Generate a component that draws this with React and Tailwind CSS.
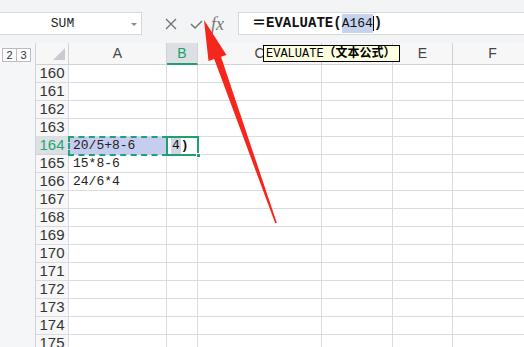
import React from 'react'

const ROWS = [160, 161, 162, 163, 164, 165, 166, 167, 168, 169, 170, 171, 172, 173, 174, 175]
const COLS = ['A', 'B', 'C', 'D', 'E', 'F']
const DATA = { '165A': '15*8-6', '166A': '24/6*4' }

const cellBase = 'border-r border-b border-[#d9dbe5] bg-white'
const mono = { fontFamily: '"Liberation Mono", "Noto Sans CJK SC", monospace' }
const sans = { fontFamily: '"Liberation Sans", "Noto Sans", sans-serif' }

function Toolbar() {
  return (
    <div className="flex h-[43px] items-start bg-[#f3f4f6] pt-[12px]">
      <div className="relative flex h-[23px] w-[142px] shrink-0 items-center justify-center border border-l-0 border-[#d6d8dc] bg-white text-[13px] text-[#222]" style={mono}>
        <span className="mr-[16px]">SUM</span>
        <span className="absolute right-[4px] top-[10px] h-0 w-0 border-x-[3px] border-t-[3px] border-x-transparent border-t-[#888]" />
      </div>
      <div className="flex h-[23px] w-[96px] shrink-0 items-center text-[#666]">
        <svg className="ml-[23px]" width="12" height="12" viewBox="0 0 12 12">
          <path d="M1 1 L11 11 M11 1 L1 11" stroke="#707070" strokeWidth="1.3" fill="none" />
        </svg>
        <svg className="ml-[13px]" width="13" height="10" viewBox="0 0 13 10">
          <path d="M1 5 L5 9 L12 2" stroke="#707070" strokeWidth="1.4" fill="none" />
        </svg>
        <span className="ml-[8px] text-[18px] italic leading-none text-[#777]" style={{ fontFamily: '"Liberation Serif", serif' }}>fx</span>
      </div>
      <div className="flex h-[23px] flex-1 items-center border border-r-0 border-[#d6d8dc] bg-white pl-[13px] text-[#111]">
        <span className="text-[14px] font-bold" style={mono}>＝EVALUATE(</span>
        <span className="bg-[#c7d3ec] text-[13px]" style={mono}>A164</span>
        <span className="h-[15px] w-px bg-black" />
        <span className="text-[14px] font-bold" style={mono}>)</span>
      </div>
    </div>
  )
}

function OutlineStrip() {
  return (
    <div className="w-[36px] shrink-0 border-r border-[#cfd2da] bg-[#f5f6f8]">
      <div className="flex h-[22px] items-center pt-[2px] text-[11px] text-[#333]" style={sans}>
        <span className="h-[14px] w-[3px] border-r border-[#b9bcc4] bg-white" />
        <span className="flex h-[14px] w-[14px] items-center justify-center border-y border-r border-[#b9bcc4] bg-white">2</span>
        <span className="flex h-[14px] w-[14px] items-center justify-center border-y border-r border-[#b9bcc4] bg-white">3</span>
      </div>
    </div>
  )
}

function Grid() {
  return (
    <div className="grid flex-1 grid-cols-[33px_98px_31px_124px_71px_60px_80px] grid-rows-[22px] auto-rows-[18px]">
      <div className="relative border-r border-b border-[#cfd2da] bg-[#f7f7f8]">
        <span className="absolute bottom-[4px] right-[3px] h-0 w-0 border-l-[12px] border-t-[12px] border-l-transparent border-t-transparent border-b-0 border-r-0" />
        <svg className="absolute bottom-[4px] right-[3px]" width="12" height="12" viewBox="0 0 12 12">
          <path d="M12 0 L12 12 L0 12 Z" fill="#c9cbd0" />
        </svg>
      </div>
      {COLS.map((c) =>
        c === 'B' ? (
          <div key={c} className="flex items-center justify-center border-r border-b-2 border-r-[#cfd2da] border-b-[#21a06e] bg-[#dcdfe4] text-[14px] text-[#21a06e]" style={sans}>{c}</div>
        ) : (
          <div key={c} className="flex items-center justify-center border-r border-b border-[#cfd2da] bg-[#f7f7f8] text-[14px] text-[#444]" style={sans}>{c}</div>
        )
      )}
      {ROWS.map((r) => (
        <React.Fragment key={r}>
          <div
            className={r === 164
              ? 'flex items-center justify-center border-r border-b border-[#cfd2da] bg-[#dcdfe4] text-[15px] text-[#26a472]'
              : 'flex items-center justify-center border-r border-b border-[#d9dbe5] bg-[#f7f7f8] text-[15px] text-[#333]'}
            style={sans}
          >
            {r}
          </div>
          {COLS.map((c) => {
            if (r === 164 && c === 'A') {
              return (
                <div key={c} className="relative flex items-center bg-[#c6cef0] pl-[4px] text-[13px] text-[#222]" style={mono}>
                  20/5+8-6
                  <span className="absolute -left-px -top-px bottom-[-1px] right-[-1px] border-2 border-dashed border-[#22a07c]" />
                </div>
              )
            }
            if (r === 164 && c === 'B') {
              return (
                <div key={c} className="relative flex items-center bg-white pl-[4px] text-[13px] text-[#111]" style={mono}>
                  <span className="rounded-[3px] bg-[#d0d6e6] px-[1px]">4</span>
                  <span className="font-bold">)</span>
                  <span className="absolute -left-px -top-px bottom-[-1px] right-[-1px] border-2 border-[#20a06b]" />
                  <span className="absolute bottom-[-3px] right-[-3px] h-[5px] w-[5px] border border-white bg-[#20a06b]" />
                </div>
              )
            }
            return (
              <div key={c} className={`${cellBase} flex items-center pl-[4px] text-[13px] text-[#222]`} style={mono}>
                {DATA[`${r}${c}`]}
              </div>
            )
          })}
        </React.Fragment>
      ))}
    </div>
  )
}

export default function App() {
  return (
    <div className="relative h-[347px] w-[524px] overflow-hidden bg-white">
      <Toolbar />
      <div className="flex">
        <OutlineStrip />
        <Grid />
      </div>

      <div className="absolute left-[263px] top-[45px] flex h-[17px] w-[137px] items-center border border-black bg-[#ffffe1] pl-[2px] text-[12px] text-black" style={mono}>
        EVALUATE<span className="font-bold">（文本公式）</span>
      </div>

      <svg className="pointer-events-none absolute left-0 top-0" width="524" height="347" viewBox="0 0 524 347">
        <polygon
          points="204,20 226.5,55 221,56.8 276.8,222.8 275.2,223.2 214.2,59 208.5,61"
          fill="#f5261c"
        />
      </svg>
    </div>
  )
}
